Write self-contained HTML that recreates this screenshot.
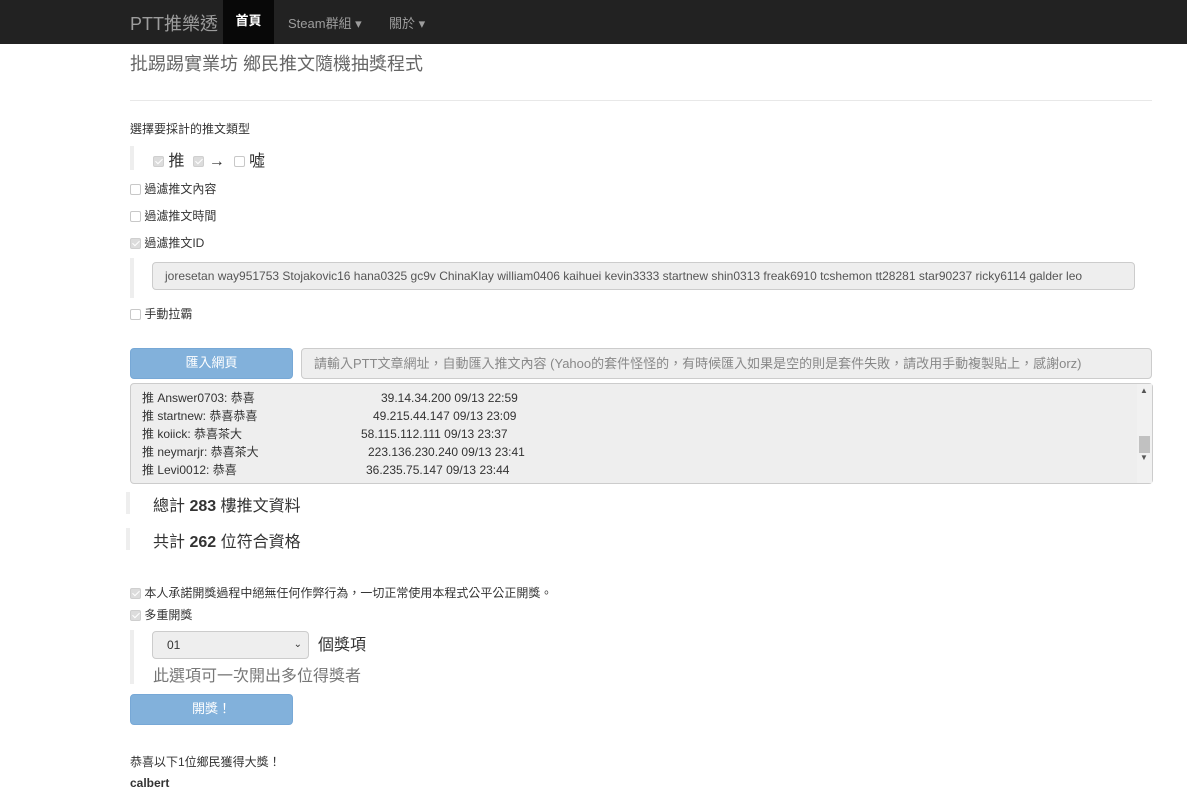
<!DOCTYPE html><html><head><meta charset="utf-8"><style>
*{box-sizing:border-box}
body{margin:0;width:1187px;height:800px;overflow:hidden;background:#fff;font-family:"Liberation Sans","Noto Sans CJK TC",sans-serif;color:#333;font-size:12px;position:relative}
.a{position:absolute;white-space:nowrap}
.nav{position:absolute;left:0;top:0;width:1187px;height:44px;background:#222}
.cb{display:inline-block;width:11px;height:11px;border:1px solid #c8c8c8;border-radius:2px;background:#fff;vertical-align:middle;position:relative}
.cb.on{background:#dcdcdc;border-color:#cfcfcf}
.cb.on:after{content:"";position:absolute;left:3px;top:0px;width:3px;height:6px;border:solid #fff;border-width:0 1.5px 1.5px 0;transform:rotate(45deg)}
.bq{position:absolute;border-left:4px solid #eee}
.btn{position:absolute;background:#82b1db;border:1px solid #77a8d6;border-radius:4px;color:#fff;font-size:13px;text-align:center;line-height:28px}
.inp{position:absolute;background:#eee;border:1px solid #ccc;border-radius:4px;color:#666;font-size:13px;padding-left:12px;line-height:26px;white-space:nowrap;overflow:hidden}
</style></head><body>
<div class="nav"></div>
<div class="a" style="left:130px;top:10px;font-size:18px;color:#9d9d9d">PTT推樂透</div>
<div class="a" style="left:223px;top:0;width:51px;height:44px;background:#080808;color:#fff;font-size:13px;font-weight:bold;text-align:center;line-height:42px">首頁</div>
<div class="a" style="left:288px;top:13px;font-size:13px;color:#9d9d9d">Steam群組 ▾</div>
<div class="a" style="left:389px;top:13px;font-size:13px;color:#9d9d9d">關於 ▾</div>
<div class="a" style="left:130px;top:50px;font-size:18px;color:#666">批踢踢實業坊 鄉民推文隨機抽獎程式</div>
<div class="a" style="left:130px;top:100px;width:1022px;height:1px;background:#e8e8e8"></div>
<div class="a" style="left:130px;top:120px">選擇要採計的推文類型</div>
<div class="bq" style="left:130px;top:146px;height:24px"></div>
<div class="a" style="left:153px;top:147px;font-size:16px"><span class="cb on"></span> 推 &nbsp;<span class="cb on"></span> → &nbsp;<span class="cb"></span> 噓</div>
<div class="a" style="left:130px;top:180px"><span class="cb"></span> 過濾推文內容</div>
<div class="a" style="left:130px;top:207px"><span class="cb"></span> 過濾推文時間</div>
<div class="a" style="left:130px;top:234px"><span class="cb on"></span> 過濾推文ID</div>
<div class="bq" style="left:130px;top:258px;height:40px"></div>
<div class="inp" style="left:152px;top:262px;width:983px;height:28px;color:#555;font-size:12px">joresetan way951753 Stojakovic16 hana0325 gc9v ChinaKlay william0406 kaihuei kevin3333 startnew shin0313 freak6910 tcshemon tt28281 star90237 ricky6114 galder leo</div>
<div class="a" style="left:130px;top:305px"><span class="cb"></span> 手動拉霸</div>
<div class="btn" style="left:130px;top:348px;width:163px;height:31px">匯入網頁</div>
<div class="inp" style="left:301px;top:348px;width:851px;height:31px;line-height:29px;color:#888">請輸入PTT文章網址，自動匯入推文內容 (Yahoo的套件怪怪的，有時候匯入如果是空的則是套件失敗，請改用手動複製貼上，感謝orz)</div>
<div class="a" style="left:130px;top:383px;width:1023px;height:101px;background:#eee;border:1px solid #ccc;border-radius:4px"></div>
<div class="a" style="left:1137px;top:384px;width:15px;height:99px;background:#f1f1f1"></div>
<div class="a" style="left:1139px;top:436px;width:11px;height:17px;background:#c1c1c1"></div>
<div class="a" style="left:1140px;top:386px;font-size:8px;color:#555">▲</div>
<div class="a" style="left:1140px;top:453px;font-size:8px;color:#555">▼</div>
<div class="a" style="left:142px;top:389px;line-height:18px;font-size:12px;color:#333">
推 Answer0703: 恭喜<br>推 startnew: 恭喜恭喜<br>推 koiick: 恭喜茶大<br>推 neymarjr: 恭喜茶大<br>推 Levi0012: 恭喜</div>
<div class="a" style="left:381px;top:389px;line-height:18px;font-size:12px">39.14.34.200 09/13 22:59</div>
<div class="a" style="left:373px;top:407px;line-height:18px;font-size:12px">49.215.44.147 09/13 23:09</div>
<div class="a" style="left:361px;top:425px;line-height:18px;font-size:12px">58.115.112.111 09/13 23:37</div>
<div class="a" style="left:368px;top:443px;line-height:18px;font-size:12px">223.136.230.240 09/13 23:41</div>
<div class="a" style="left:366px;top:461px;line-height:18px;font-size:12px">36.235.75.147 09/13 23:44</div>
<div class="bq" style="left:126px;top:492px;height:22px"></div>
<div class="a" style="left:153px;top:492px;font-size:16px">總計 <b>283</b> 樓推文資料</div>
<div class="bq" style="left:126px;top:528px;height:22px"></div>
<div class="a" style="left:153px;top:528px;font-size:16px">共計 <b>262</b> 位符合資格</div>
<div class="a" style="left:130px;top:584px"><span class="cb on"></span> 本人承諾開獎過程中絕無任何作弊行為，一切正常使用本程式公平公正開獎。</div>
<div class="a" style="left:130px;top:606px"><span class="cb on"></span> 多重開獎</div>
<div class="bq" style="left:130px;top:630px;height:54px"></div>
<div class="a" style="left:152px;top:631px;width:157px;height:28px;background:#eee;border:1px solid #ccc;border-radius:4px;font-size:12px;line-height:26px;padding-left:14px">01<span style="position:absolute;right:6px;top:0;font-size:10px">⌄</span></div>
<div class="a" style="left:318px;top:631px;font-size:16px">個獎項</div>
<div class="a" style="left:153px;top:662px;font-size:16px;color:#777">此選項可一次開出多位得獎者</div>
<div class="btn" style="left:130px;top:694px;width:163px;height:31px">開獎！</div>
<div class="a" style="left:130px;top:753px">恭喜以下1位鄉民獲得大獎！</div>
<div class="a" style="left:130px;top:776px;font-weight:bold">calbert</div>
</body></html>
